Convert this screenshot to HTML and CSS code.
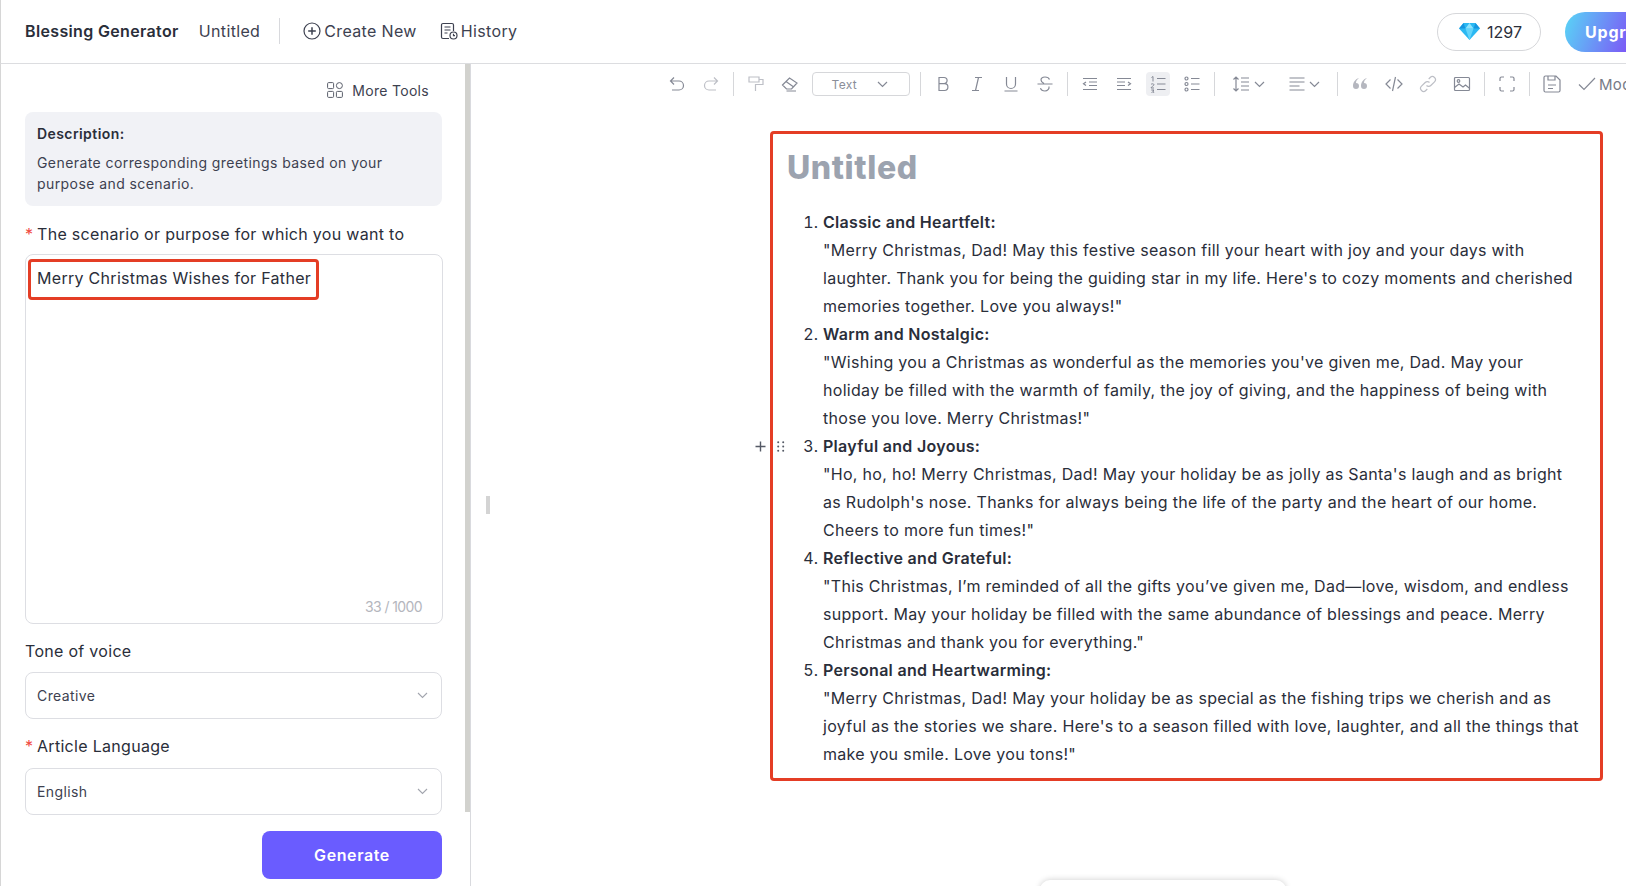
FILE: index.html
```html
<!DOCTYPE html>
<html lang="en">
<head>
  <meta charset="UTF-8">
  <title>Blessing Generator</title>
  <link rel="stylesheet" href="styles.css">
</head>
<body>

  <!-- Top bar -->
  <header class="topbar">
    <div class="topbar-left">
      <span class="app-name">Blessing Generator</span>
      <span class="doc-name">Untitled</span>
      <span class="topbar-sep"></span>
      <a class="top-link">
        <svg width="18" height="18" viewBox="0 0 18 18" fill="none" stroke="#3d4150" stroke-width="1.2"><circle cx="9" cy="9" r="8"/><path d="M9 5.2v7.6M5.2 9h7.6" stroke-width="1.5"/></svg>
        Create New
      </a>
      <a class="top-link history-link">
        <svg width="18" height="18" viewBox="0 0 18 18" fill="none" stroke="#3d4150" stroke-width="1.2"><path d="M9 16.5H3a1.5 1.5 0 0 1-1.5-1.5V3A1.5 1.5 0 0 1 3 1.500h9A1.500 1.500 0 0 1 13.500 3v6"/><path d="M4.500 5h6M4.500 8h6M4.500 11h3"/><circle cx="13.500" cy="13.500" r="3.500"/><path d="M13.500 11.800v1.900h1.500"/></svg>
        History
      </a>
    </div>
    <div class="credits">
      <svg width="21" height="17" viewBox="0 0 21 17"><polygon points="4.500,0 16.500,0 21,5.500 10.500,17 0,5.500" fill="#2bb8f2"/><polygon points="6.500,5.500 14.500,5.500 10.500,17" fill="#63d4fa"/><polygon points="4.500,0 6.500,5.500 0,5.500" fill="#1596e0"/><polygon points="16.500,0 21,5.500 14.500,5.500" fill="#1596e0"/><polygon points="6.500,5.500 10.500,0 14.500,5.500" fill="#8fe4fd"/></svg>
      <span>1297</span>
    </div>
    <button class="upgrade" type="button">Upgrade</button>
  </header>

  <div class="page">

    <!-- Left form -->
    <aside class="sidebar">
      <div class="more-tools">
        <svg width="16" height="16" viewBox="0 0 16 16" fill="none" stroke="#5a5e6a" stroke-width="1"><rect x="0.600" y="0.600" width="6" height="6" rx="1"/><rect x="9.400" y="0.600" width="6" height="6" rx="3"/><rect x="0.600" y="9.400" width="6" height="6" rx="1"/><rect x="9.400" y="9.400" width="6" height="6" rx="1"/></svg>
        More Tools
      </div>

      <div class="description">
        <div class="description-title">Description:</div>
        <p>Generate corresponding greetings based on your purpose and scenario.</p>
      </div>

      <label class="field-label scenario-label"><span class="star">*</span>The scenario or purpose for which you want to generate greetings</label>
      <div class="text-box">
        Merry Christmas Wishes for Father
        <div class="mark-box"></div>
        <span class="counter">33 / 1000</span>
      </div>

      <label class="field-label tone-label">Tone of voice</label>
      <div class="select-box">
        Creative
        <svg width="11" height="7" viewBox="0 0 11 7" fill="none" stroke="#a2a5ae" stroke-width="1.100"><path d="M1 1l4.500 4.500L10 1"/></svg>
      </div>

      <label class="field-label lang-label"><span class="star">*</span>Article Language</label>
      <div class="select-box">
        English
        <svg width="11" height="7" viewBox="0 0 11 7" fill="none" stroke="#a2a5ae" stroke-width="1.100"><path d="M1 1l4.500 4.500L10 1"/></svg>
      </div>

      <button class="generate" type="button">Generate</button>
      <div class="side-scroll"></div>
    </aside>

    <!-- Editor -->
    <main class="editor">
      <div class="toolbar">
        <span class="tool"><svg width="18" height="18" viewBox="0 0 18 18"><path d="M6 2.500L2.500 6 6 9.500M2.500 6H11a4.500 4.500 0 0 1 0 9H4"/></svg></span>
        <span class="tool dim"><svg width="18" height="18" viewBox="0 0 18 18"><path d="M12 2.500L15.500 6 12 9.500M15.500 6H7a4.500 4.500 0 0 0 0 9h7"/></svg></span>
        <span class="tool-sep"></span>
        <span class="tool dim"><svg width="18" height="18" viewBox="0 0 18 18"><path d="M2 2h10v5H2zM12 4.500h4v5H8.500V16"/></svg></span>
        <span class="tool"><svg width="18" height="18" viewBox="0 0 18 18"><path d="M1.500 10l7-7 7.500 5-5.500 6H5.500zM5 6.500l7 5M5.500 16H15"/></svg></span>
        <div class="tool-select">Text<svg width="11" height="7" viewBox="0 0 11 7"><path d="M1 1l4.500 4.500L10 1"/></svg></div>
        <span class="tool-sep"></span>
        <span class="tool"><svg width="18" height="18" viewBox="0 0 18 18"><path d="M5 2.500h5a3 3 0 0 1 0 6.200H5zM5 8.700h5.500a3.300 3.300 0 0 1 0 6.800H5z"/></svg></span>
        <span class="tool"><svg width="18" height="18" viewBox="0 0 18 18"><path d="M7 2.500h7M4 15.500h7M10.500 2.500l-3 13"/></svg></span>
        <span class="tool"><svg width="18" height="18" viewBox="0 0 18 18"><path d="M4.500 2v7a4.500 4.500 0 0 0 9 0V2M2.500 16h13"/></svg></span>
        <span class="tool"><svg width="18" height="18" viewBox="0 0 18 18"><path d="M13.500 4.500C13 3 11 2 9 2 6.500 2 5 3.300 5 5c0 1.500 1 2.500 3 3.500M1.500 9h15M13 11.500c.5 2.500-1.500 4.500-4 4.500-2.300 0-4-1-4.500-2.800"/></svg></span>
        <span class="tool-sep"></span>
        <span class="tool"><svg width="18" height="18" viewBox="0 0 18 18"><path d="M2 3.500h14M8 7h8M8 10.500h8M2 14.500h14M5 7L2.500 8.800 5 10.500"/></svg></span>
        <span class="tool"><svg width="18" height="18" viewBox="0 0 18 18"><path d="M2 3.500h14M2 7h8M2 10.500h8M2 14.500h14M13 7l2.500 1.800L13 10.500"/></svg></span>
        <span class="tool active"><svg width="18" height="18" viewBox="0 0 18 18"><path d="M8 3.500h8.500M8 9h8.500M8 14.500h8.500M2.500 2.500l1.500-1v5M2 9.500c.5-1 3-1 3 .3 0 1-3 2-3 3.200h3M2.300 15h2.700l-1.400 1.200c1.500 0 1.800 1.800 0 1.800H2" stroke-width="1"/></svg></span>
        <span class="tool"><svg width="18" height="18" viewBox="0 0 18 18"><circle cx="3.500" cy="3.500" r="1.500"/><circle cx="3.500" cy="9" r="1.500"/><circle cx="3.500" cy="14.500" r="1.500"/><path d="M8 3.500h8.500M8 9h8.500M8 14.500h8.500"/></svg></span>
        <span class="tool-sep"></span>
        <span class="tool tool-wide"><svg width="18" height="18" viewBox="0 0 18 18"><path d="M4 2v14M1.500 4.500L4 2l2.500 2.500M1.500 13.500L4 16l2.500-2.500M9 3h8M9 7h8M9 11h8M9 15h8"/></svg><svg width="11" height="7" viewBox="0 0 11 7"><path d="M1 1l4.500 4.500L10 1"/></svg></span>
        <span class="tool tool-wide"><svg width="16" height="18" viewBox="0 0 16 18"><path d="M.5 3h15M.5 7h15M.5 11h10M.5 15h15"/></svg><svg width="11" height="7" viewBox="0 0 11 7"><path d="M1 1l4.500 4.500L10 1"/></svg></span>
        <span class="tool-sep"></span>
        <span class="tool dim"><svg width="16" height="14" viewBox="0 0 16 14" class="solid"><path d="M7 1C3.500 2 1 5 1 9a3 3 0 1 0 3-3c0-2 1-3.500 3-5zM15 1c-3.500 1-6 4-6 8a3 3 0 1 0 3-3c0-2 1-3.500 3-5z"/></svg></span>
        <span class="tool"><svg width="18" height="18" viewBox="0 0 18 18"><path d="M5.500 4.500L1 9l4.500 4.500M12.500 4.500L17 9l-4.500 4.500M10.500 2l-3 14"/></svg></span>
        <span class="tool dim"><svg width="18" height="18" viewBox="0 0 18 18"><path d="M7.500 10.500a3 3 0 0 0 4.300 0l3.700-3.700a3 3 0 0 0-4.300-4.300L9.700 4M10.500 7.500a3 3 0 0 0-4.300 0l-3.700 3.700a3 3 0 0 0 4.300 4.300L8.300 14"/></svg></span>
        <span class="tool"><svg width="18" height="18" viewBox="0 0 18 18"><rect x="1.500" y="2.500" width="15" height="13" rx="1"/><circle cx="5.500" cy="6" r="1.300"/><path d="M1.500 12.500L6 9l4 3 2.500-2 4 3.200"/></svg></span>
        <span class="tool-sep"></span>
        <span class="tool"><svg width="18" height="18" viewBox="0 0 18 18"><path d="M2 6V3.500A1.500 1.500 0 0 1 3.500 2H6M12 2h2.500A1.500 1.500 0 0 1 16 3.500V6M16 12v2.500a1.500 1.500 0 0 1-1.500 1.500H12M6 16H3.500A1.500 1.500 0 0 1 2 14.500V12"/></svg></span>
        <span class="tool-sep"></span>
        <span class="tool"><svg width="18" height="18" viewBox="0 0 18 18"><path d="M2.500 1h10.500l4 4v10.500a1.500 1.500 0 0 1-1.500 1.500h-13A1.500 1.500 0 0 1 1 15.500v-13A1.500 1.500 0 0 1 2.500 1zM5 1v4h7V1M5 10h8M5 13.500h5"/></svg></span>
        <span class="tool-mode"><svg width="18" height="14" viewBox="0 0 18 14"><path d="M1 7.500L6 12.500 17 1"/></svg>Mode</span>
      </div>

      <div class="block-handle">
        <svg width="11" height="11" viewBox="0 0 11 11" fill="none" stroke="#555a66" stroke-width="1.400"><path d="M5.500 .5v10M.5 5.500h10"/></svg>
        <svg width="8" height="11" viewBox="0 0 8 11" fill="#555a66"><circle cx="1.200" cy="1.200" r="1"/><circle cx="6.200" cy="1.200" r="1"/><circle cx="1.200" cy="5.500" r="1"/><circle cx="6.200" cy="5.500" r="1"/><circle cx="1.200" cy="9.800" r="1"/><circle cx="6.200" cy="9.800" r="1"/></svg>
      </div>

      <article class="doc">
        <h1>Untitled</h1>
        <ol>
          <li><strong>Classic and Heartfelt:</strong>"Merry Christmas, Dad! May this festive season fill your heart with joy and your days with laughter. Thank you for being the guiding star in my life. Here's to cozy moments and cherished memories together. Love you always!"</li>
          <li><strong>Warm and Nostalgic:</strong>"Wishing you a Christmas as wonderful as the memories you've given me, Dad. May your holiday be filled with the warmth of family, the joy of giving, and the happiness of being with those you love. Merry Christmas!"</li>
          <li><strong>Playful and Joyous:</strong>"Ho, ho, ho! Merry Christmas, Dad! May your holiday be as jolly as Santa's laugh and as bright as Rudolph's nose. Thanks for always being the life of the party and the heart of our home. Cheers to more fun times!"</li>
          <li><strong>Reflective and Grateful:</strong>"This Christmas, I’m reminded of all the gifts you’ve given me, Dad—love, wisdom, and endless support. May your holiday be filled with the same abundance of blessings and peace. Merry Christmas and thank you for everything."</li>
          <li><strong>Personal and Heartwarming:</strong>"Merry Christmas, Dad! May your holiday be as special as the fishing trips we cherish and as joyful as the stories we share. Here's to a season filled with love, laughter, and all the things that make you smile. Love you tons!"</li>
        </ol>
      </article>

      <div class="resize-grip"></div>
      <div class="float-panel"></div>
    </main>
  </div>

</body>
</html>
```

FILE: styles.css
```css
* {
  box-sizing: border-box;
}

html, body {
  height: 886px;
  margin: 0;
  overflow: hidden;
}

body {
  font-family: Inter, "Noto Sans", sans-serif;
  font-size: 16px;
  color: #2a2e3a;
  background: #fff;
  letter-spacing: .3px;
}

/* Top bar */
.topbar {
  display: flex;
  align-items: center;
  height: 64px;
  border-left: 1px solid #d6d6d6;
  border-bottom: 1px solid #dcdde0;
  overflow: hidden;
}

.topbar-left {
  flex: 0 0 1436px;
  display: flex;
  align-items: center;
  padding: 0 0 2px 24px;
  color: #3d4150;
  letter-spacing: .35px;
}

.app-name {
  font-weight: 600;
  color: #2a2e3a;
  margin-right: 20px;
}

.topbar-sep {
  width: 1px;
  height: 26px;
  background: #d8d9dd;
  margin: 0 23px 0 19px;
}

.top-link {
  display: flex;
  align-items: center;
  gap: 3px;
}

.history-link {
  margin-left: 23px;
}

.credits {
  flex: none;
  display: flex;
  align-items: center;
  gap: 7px;
  width: 104px;
  height: 38px;
  padding-left: 21px;
  border: 1px solid #d6d7da;
  border-radius: 19px;
  letter-spacing: 0;
}

.upgrade {
  flex: none;
  width: 130px;
  height: 40px;
  margin-left: 24px;
  padding: 0 0 0 20px;
  text-align: left;
  border: none;
  border-radius: 20px;
  background: linear-gradient(110deg, #58d6f6 0, #7b5cf6 70px);
  color: #fff;
  font: 700 16px Inter, sans-serif;
  letter-spacing: .8px;
}

.page {
  display: flex;
  height: 822px;
}

/* Left form */
.sidebar {
  position: relative;
  flex: 0 0 471px;
  padding: 13px 0 0 24px;
  border-left: 1px solid #d6d6d6;
  border-right: 1px solid #d9dade;
  overflow: hidden;
}

.more-tools {
  display: flex;
  align-items: center;
  justify-content: flex-end;
  gap: 9px;
  width: 404px;
  height: 26px;
  font-size: 14px;
  color: #3d4150;
}

.description {
  width: 417px;
  margin-top: 9px;
  padding: 12px;
  background: #f1f2f6;
  border-radius: 8px;
  font-size: 14px;
  letter-spacing: .42px;
}

.description-title {
  font-weight: 600;
  line-height: 20px;
  margin-bottom: 8px;
}

.description p {
  margin: 0;
  line-height: 21px;
  color: #3d4150;
}

.field-label {
  position: relative;
  display: block;
  width: 417px;
  line-height: 26px;
}

.star {
  color: #f0483e;
  position: absolute;
  left: 0;
}

.scenario-label {
  height: 34px;
  margin-top: 14px;
  padding: 0 11px 0 12px;
  line-height: 28px;
  overflow: hidden;
}

.tone-label {
  margin-top: 14px;
  margin-bottom: 8px;
}

.lang-label {
  margin-top: 14px;
  margin-bottom: 9px;
  padding-left: 12px;
}

.text-box {
  position: relative;
  width: 418px;
  height: 370px;
  padding: 9px 11px;
  line-height: 28px;
  border: 1px solid #dddee3;
  border-radius: 8px;
}

.mark-box {
  position: absolute;
  left: 2px;
  top: 4px;
  width: 291px;
  height: 41px;
  border: 3px solid #e43d25;
  border-radius: 4px;
}

.counter {
  position: absolute;
  right: 20px;
  bottom: 2px;
  font-size: 14px;
  color: #b4b6bd;
  letter-spacing: -.6px;
}

.select-box {
  display: flex;
  align-items: center;
  justify-content: space-between;
  width: 417px;
  height: 47px;
  padding: 0 13px 0 11px;
  border: 1px solid #dddee3;
  border-radius: 8px;
  font-size: 14px;
  letter-spacing: .4px;
  color: #3d4150;
}

.generate {
  display: block;
  width: 180px;
  height: 48px;
  margin: 16px 0 0 237px;
  border: none;
  border-radius: 8px;
  background: #6a5cff;
  color: #fff;
  font: 600 16px Inter, sans-serif;
  letter-spacing: .6px;
}

.side-scroll {
  position: absolute;
  top: 0;
  right: 0;
  width: 5px;
  height: 748px;
  background: #d2d2ce;
}

/* Editor */
.editor {
  position: relative;
  flex: 1;
  min-width: 0;
  padding: 8px 0 0 299px;
  overflow: hidden;
}

.toolbar {
  display: flex;
  align-items: center;
  gap: 10px;
  width: 1100px;
  height: 24px;
  margin-left: -105px;
}

.tool {
  flex: none;
  display: flex;
  align-items: center;
  justify-content: center;
  width: 24px;
  height: 24px;
  border-radius: 4px;
}

.tool-wide {
  width: 46px;
  gap: 4px;
}

.toolbar svg {
  fill: none;
  stroke: #858995;
  stroke-width: 1.200;
}

.toolbar svg.solid {
  fill: #b5b7bf;
  stroke: none;
}

.dim svg {
  stroke: #bdbfc6;
}

.active {
  background: #eeeff2;
}

.tool-sep {
  flex: none;
  width: 1px;
  height: 24px;
  background: #d6d7da;
}

.tool-select {
  flex: none;
  display: flex;
  align-items: center;
  justify-content: flex-end;
  gap: 20px;
  width: 98px;
  height: 24px;
  padding-right: 21px;
  border: 1px solid #d6d7da;
  border-radius: 4px;
  font-size: 12px;
  color: #8a8e99;
}

.tool-mode {
  flex: none;
  display: flex;
  align-items: center;
  gap: 3px;
  padding-left: 4px;
  font-size: 15px;
  color: #777b87;
}

.doc {
  width: 833px;
  height: 650px;
  margin-top: 35px;
  padding: 12px 20px 10px 14px;
  border: 3px solid #e43d25;
  border-radius: 4px;
}

.doc h1 {
  margin: 0 0 18px;
  font-size: 32px;
  line-height: 44px;
  font-weight: 800;
  letter-spacing: .6px;
  color: #9ca3af;
}

.doc ol {
  margin: 0;
  padding: 0 0 0 36px;
  line-height: 28px;
}

.doc strong {
  display: block;
  font-weight: 600;
}

.block-handle {
  position: absolute;
  left: 284px;
  top: 377px;
  display: flex;
  align-items: center;
  gap: 11px;
}

.resize-grip {
  position: absolute;
  left: 15px;
  top: 432px;
  width: 4px;
  height: 18px;
  background: #d4d4d4;
}

.float-panel {
  position: absolute;
  left: 569px;
  top: 816px;
  width: 246px;
  height: 40px;
  border-radius: 10px 10px 0 0;
  background: #fff;
  box-shadow: 0 0 6px rgba(0, 0, 0, .2);
}
```
